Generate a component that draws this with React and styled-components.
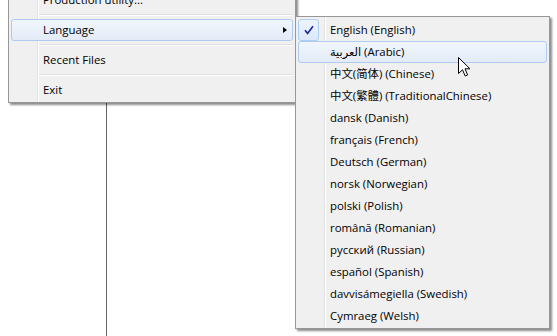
import React from "react";
import styled, { createGlobalStyle, css } from "styled-components";

const GlobalStyle = createGlobalStyle`
  html, body { margin: 0; padding: 0; background: #ffffff; }
  body { overflow: hidden; }
`;

const FONT = `"Open Sans", "DejaVu Sans", "Noto Sans CJK SC", sans-serif`;

const Desktop = styled.div`
  position: relative;
  width: 557px;
  height: 336px;
  overflow: hidden;
  background: #ffffff;
  font-family: ${FONT};
  font-size: 11.4px;
  color: #000;
`;

const Workspace = styled.div`
  display: flex;
  height: 100%;
`;

const LeftPane = styled.div`
  width: 106px;
  flex: none;
  border-right: 1px solid #646464;
`;

const RightPane = styled.div`
  flex: 1;
`;

const MenuPanel = styled.div`
  position: absolute;
  left: ${(p) => p.$left}px;
  top: ${(p) => p.$top}px;
  width: ${(p) => p.$width}px;
  box-sizing: border-box;
  border: 1px solid #979797;
  padding: 2px 2px ${(p) => p.$padBottom}px 2px;
  background:
    linear-gradient(
      to right,
      transparent ${(p) => p.$gutter}px,
      #e2e3e3 ${(p) => p.$gutter}px,
      #e2e3e3 ${(p) => p.$gutter + 1}px,
      #ffffff ${(p) => p.$gutter + 1}px,
      #ffffff ${(p) => p.$gutter + 2}px,
      transparent ${(p) => p.$gutter + 2}px
    ),
    #f0f0f0;
  box-shadow: 2px 2px 2px rgba(0, 0, 0, 0.45);
  z-index: ${(p) => p.$z};
`;

const Item = styled.div`
  position: relative;
  display: flex;
  align-items: center;
  height: 22px;
  box-sizing: border-box;
  border: 1px solid transparent;
  border-radius: 3px;
  white-space: nowrap;
  ${(p) =>
    p.$hot &&
    css`
      border-color: #aeccf0;
      background: linear-gradient(to bottom, #f1f6fc, #e3ebf7);
    `}
`;

const IconCell = styled.div`
  width: ${(p) => p.$w}px;
  flex: none;
  height: 100%;
  display: flex;
  align-items: center;
  margin-left: -1px;
`;

const Label = styled.span`
  flex: 1;
  line-height: 20px;
`;

const Arrow = styled.span`
  width: 0;
  height: 0;
  border-top: 3.5px solid transparent;
  border-bottom: 3.5px solid transparent;
  border-left: 4px solid #000;
  margin-right: 5px;
`;

const Separator = styled.div`
  height: 8px;
  margin-left: ${(p) => p.$indent}px;
  display: flex;
  align-items: center;
  &::before {
    content: "";
    display: block;
    width: 100%;
    height: 1px;
    background: #e0e0e0;
    border-bottom: 1px solid #ffffff;
  }
`;

const CheckBox = styled.div`
  width: 21px;
  height: 22px;
  margin-top: -1px;
  box-sizing: border-box;
  border: 1px solid #aecff4;
  border-radius: 3px;
  background: linear-gradient(to bottom, #eef4fc, #dce8f8);
  display: flex;
  align-items: center;
  justify-content: center;
`;

const Cursor = styled.svg`
  position: absolute;
  left: 458px;
  top: 57px;
  z-index: 10;
`;

const languages = [
  "English (English)",
  "العربية (Arabic)",
  "中文(简体) (Chinese)",
  "中文(繁體) (TraditionalChinese)",
  "dansk (Danish)",
  "français (French)",
  "Deutsch (German)",
  "norsk (Norwegian)",
  "polski (Polish)",
  "română (Romanian)",
  "русский (Russian)",
  "español (Spanish)",
  "davvisámegiella (Swedish)",
  "Cymraeg (Welsh)",
];

const mainItems = [
  { label: "Production utility...", type: "item" },
  { type: "sep" },
  { label: "Language", type: "item", sub: true, hot: true },
  { type: "sep" },
  { label: "Recent Files", type: "item" },
  { type: "sep" },
  { label: "Exit", type: "item" },
];

function CheckMark() {
  return (
    <svg width="10" height="10" viewBox="0 0 10 10">
      <path
        d="M1 5.2 L3.6 8.4 L9 1.2"
        fill="none"
        stroke="#1d2c99"
        strokeWidth="1.7"
        strokeLinejoin="miter"
      />
    </svg>
  );
}

export default function App() {
  return (
    <>
      <GlobalStyle />
      <Desktop>
        <Workspace>
          <LeftPane />
          <RightPane />
        </Workspace>

        <MenuPanel $left={8} $top={-14} $width={288} $gutter={28} $padBottom={1} $z={1}>
          {mainItems.map((it, i) =>
            it.type === "sep" ? (
              <Separator key={i} $indent={28} />
            ) : (
              <Item key={i} $hot={it.hot}>
                <IconCell $w={32} />
                <Label>{it.label}</Label>
                {it.sub && <Arrow />}
              </Item>
            )
          )}
        </MenuPanel>

        <MenuPanel $left={295} $top={16} $width={255} $gutter={28} $padBottom={1} $z={2}>
          {languages.map((l, i) => (
            <Item key={l} $hot={i === 1}>
              <IconCell $w={32}>
                {i === 0 && (
                  <CheckBox>
                    <CheckMark />
                  </CheckBox>
                )}
              </IconCell>
              <Label>{l}</Label>
            </Item>
          ))}
        </MenuPanel>

        <Cursor width="13" height="21" viewBox="0 0 13 21">
          <path
            d="M0.5 0.5 L0.5 16.5 L4.5 12.8 L7.2 19 L9.6 18 L7 11.8 L12 11.8 Z"
            fill="#ffffff"
            stroke="#000000"
            strokeWidth="1"
            strokeLinejoin="miter"
          />
        </Cursor>
      </Desktop>
    </>
  );
}
